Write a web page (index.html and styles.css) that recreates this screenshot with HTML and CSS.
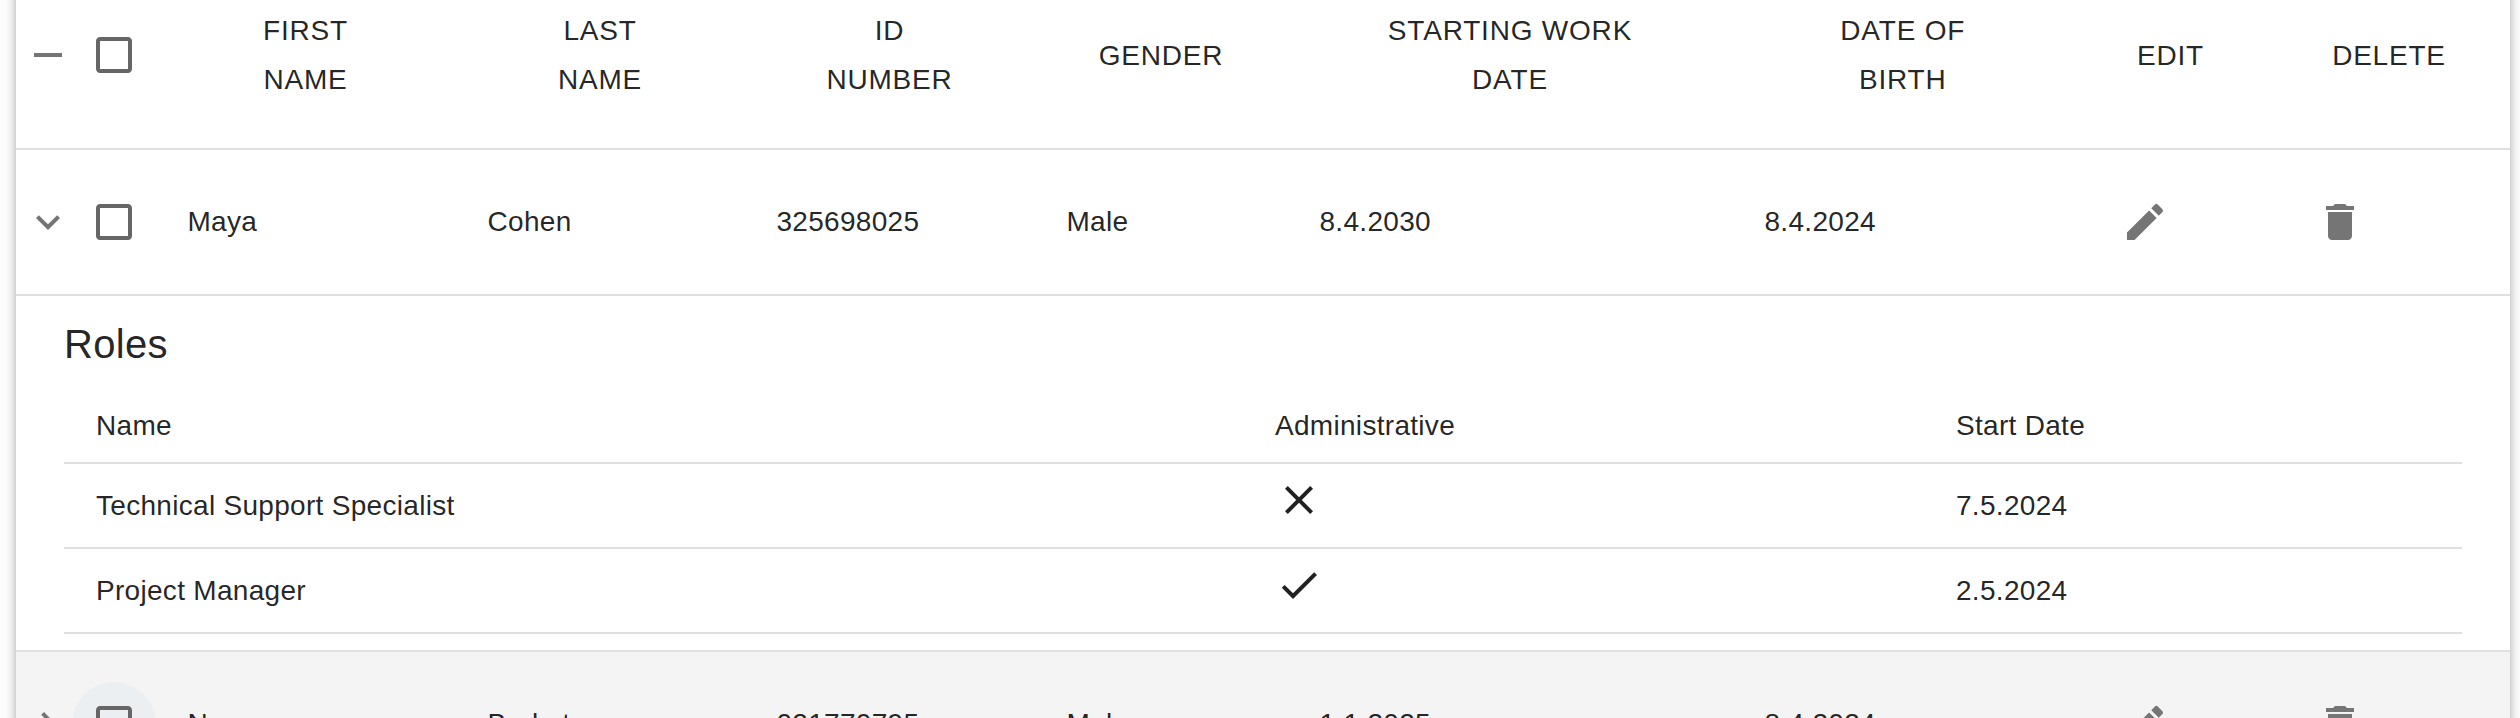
FILE: index.html
```html
<!DOCTYPE html>
<html lang="en">
<head>
<meta charset="utf-8">
<title>Employees</title>
<link rel="stylesheet" href="styles.css">
</head>
<body>
<svg class="defs" aria-hidden="true">
  <symbol id="box" viewBox="0 0 24 24"><path d="M19 5v14H5V5h14m0-2H5c-1.100 0-2 .9-2 2v14c0 1.100.9 2 2 2h14c1.100 0 2-.9 2-2V5c0-1.100-.9-2-2-2z"/></symbol>
  <symbol id="edit" viewBox="0 0 24 24"><path d="M3 17.250V21h3.750L17.810 9.940l-3.750-3.750L3 17.250zM20.710 7.040c.39-.39.39-1.020 0-1.410l-2.340-2.340a.9959.9959 0 0 0-1.410 0l-1.830 1.830 3.750 3.750 1.830-1.830z"/></symbol>
  <symbol id="delete" viewBox="0 0 24 24"><path d="M6 19c0 1.100.9 2 2 2h8c1.100 0 2-.9 2-2V7H6v12zM19 4h-3.500l-1-1h-5l-1 1H5v2h14V4z"/></symbol>
</svg>
<main class="paper">
  <div class="row head">
    <div class="select">
      <svg class="icon"><path transform="scale(2)" d="M19 13H5v-2h14v2z"/></svg>
      <span class="check"><svg class="icon"><use href="#box"/></svg></span>
    </div>
    <div class="cell">FIRST<br>NAME</div>
    <div class="cell">LAST<br>NAME</div>
    <div class="cell">ID<br>NUMBER</div>
    <div class="cell">GENDER</div>
    <div class="cell">STARTING WORK<br>DATE</div>
    <div class="cell">DATE OF<br>BIRTH</div>
    <div class="cell">EDIT</div>
    <div class="cell">DELETE</div>
  </div>
  <div class="row">
    <div class="select">
      <svg class="icon"><path transform="scale(2)" d="M7.410 8.590 12 13.170l4.590-4.580L18 10l-6 6-6-6 1.410-1.410z"/></svg>
      <span class="check"><svg class="icon"><use href="#box"/></svg></span>
    </div>
    <div class="cell">Maya</div>
    <div class="cell">Cohen</div>
    <div class="cell">325698025</div>
    <div class="cell">Male</div>
    <div class="cell">8.4.2030</div>
    <div class="cell">8.4.2024</div>
    <div class="cell action"><svg class="icon"><use href="#edit"/></svg></div>
    <div class="cell action"><svg class="icon"><use href="#delete"/></svg></div>
  </div>
  <section class="details">
    <h6 class="title">Roles</h6>
    <div class="role role-head"><span>Name</span><span>Administrative</span><span>Start Date</span></div>
    <div class="role">
      <span>Technical Support Specialist</span>
      <span class="flag"><svg class="icon"><path transform="scale(2)" d="M19 6.410 17.590 5 12 10.590 6.410 5 5 6.410 10.590 12 5 17.590 6.410 19 12 13.410 17.590 19 19 17.590 13.410 12z"/></svg></span>
      <span>7.5.2024</span>
    </div>
    <div class="role">
      <span>Project Manager</span>
      <span class="flag"><svg class="icon"><path transform="scale(2)" d="M9 16.170 4.830 12l-1.420 1.410L9 19 21 7l-1.410-1.410z"/></svg></span>
      <span>2.5.2024</span>
    </div>
  </section>
  <div class="row hovered">
    <div class="select">
      <svg class="icon"><path transform="scale(2)" d="M8.590 16.590 13.170 12 8.590 7.410 10 6l6 6-6 6-1.410-1.410z"/></svg>
      <span class="check active"><svg class="icon"><use href="#box"/></svg></span>
    </div>
    <div class="cell">Noa</div>
    <div class="cell">Barkat</div>
    <div class="cell">021770795</div>
    <div class="cell">Male</div>
    <div class="cell">1.1.2025</div>
    <div class="cell">8.4.2024</div>
    <div class="cell action"><svg class="icon"><use href="#edit"/></svg></div>
    <div class="cell action"><svg class="icon"><use href="#delete"/></svg></div>
  </div>
</main>
</body>
</html>
```

FILE: styles.css
```css
* { box-sizing: border-box; }
html, body { height: 100%; overflow: hidden; }
body {
  margin: 0;
  padding: 0 10px 0 16px;
  background: #fff;
  color: rgba(0, 0, 0, .87);
  font: 28px/40px "Liberation Sans", Arial, sans-serif;
  letter-spacing: .3px;
}
.defs { display: none; }
.paper {
  height: 900px;
  background: #fff;
  box-shadow: 0 4px 8px -2px rgba(0, 0, 0, .2), 0 8px 10px rgba(0, 0, 0, .14), 0 2px 20px rgba(0, 0, 0, .12);
}
.row {
  display: grid;
  grid-template-columns: 139.5px 300px 289px 290px 253px 445px 340.5px 195px 242px;
  align-items: center;
  height: 146px;
  border-bottom: 2px solid #e0e0e0;
}
.cell { padding: 0 32px; }
.head { height: 188px; margin-top: -38px; }
.head .cell { text-align: center; line-height: 49px; letter-spacing: .8px; }
.select { display: flex; align-items: center; padding-left: 8px; color: #757575; }
.icon { display: block; width: 48px; height: 48px; fill: currentColor; }
.check { display: flex; padding: 18px; margin-right: -20px; color: #666; border-radius: 50%; }
.check.active { background: rgba(25, 118, 210, .04); }
.action { padding-left: 48px; color: #757575; }
.details { height: 356px; padding: 16px 48px; border-bottom: 2px solid #e0e0e0; }
.title { margin: 0 0 14px; font-size: 40px; font-weight: 400; line-height: 64px; }
.role {
  display: grid;
  grid-template-columns: 1179px 681px 1fr;
  align-items: center;
  height: 85px;
  padding-left: 32px;
  border-bottom: 2px solid #e0e0e0;
}
.role-head { height: 74px; }
.flag { align-self: start; padding-top: 12px; }
.hovered { background: #f4f4f4; }
```
